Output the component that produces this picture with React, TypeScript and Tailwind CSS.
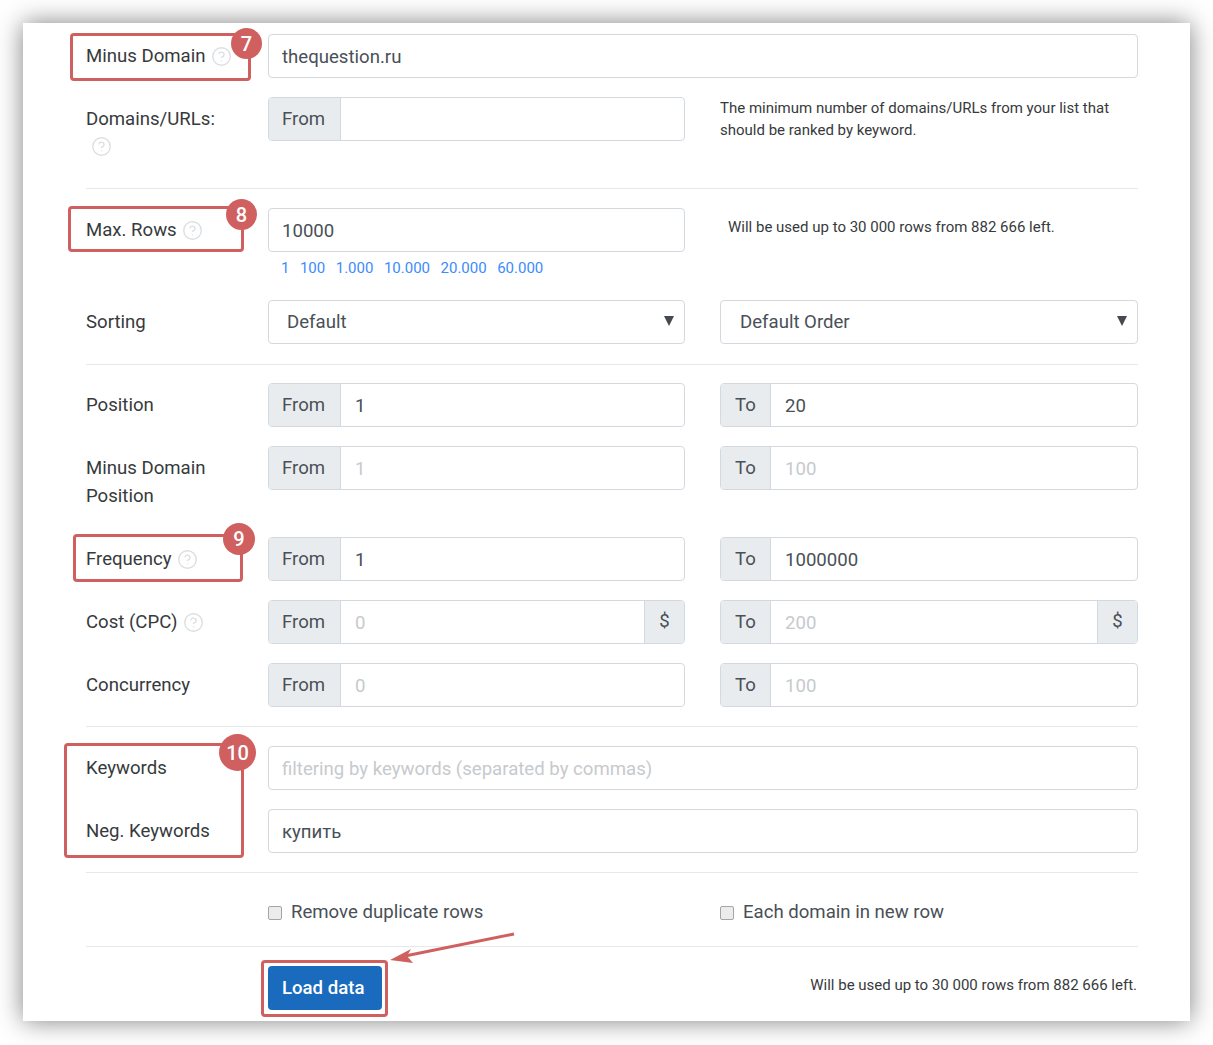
import { CircleHelp } from "lucide-react";

const Help = () => <CircleHelp size={21} strokeWidth={1.6} className="text-[#dcdfe2] shrink-0" />;

function Label({ children }: { children: React.ReactNode }) {
  return <div className="w-[182px] shrink-0 pt-[8px] text-[18.6px] leading-[28px] text-[#373a3c]">{children}</div>;
}

function Row({ className = "", children }: { className?: string; children: React.ReactNode }) {
  return <div className={`flex ${className}`}>{children}</div>;
}

const Divider = ({ className = "" }: { className?: string }) => <div className={`h-px bg-[#e6e8eb] ${className}`} />;

function Field({
  addon,
  value,
  placeholder,
  suffix,
  className = "w-[417px]",
}: {
  addon?: string;
  value?: string;
  placeholder?: string;
  suffix?: string;
  className?: string;
}) {
  return (
    <div className={`flex h-[44px] shrink-0 rounded-[4px] border border-[#d4d9df] bg-white text-[18.6px] text-[#495057] ${className}`}>
      {addon && (
        <span className={`flex items-center rounded-l-[3px] border-r border-[#d4d9df] bg-[#e9ecef] pt-[2px] ${addon === "To" ? "w-[50px] pl-[14px]" : "w-[72px] pl-[13px]"}`}>
          {addon}
        </span>
      )}
      <input
        readOnly
        value={value ?? ""}
        placeholder={placeholder}
        className={`min-w-0 flex-1 bg-transparent pr-[14px] pt-[3px] outline-none placeholder:text-[#c6cacd] ${addon ? "pl-[14px]" : "pl-[13px]"}`}
      />
      {suffix && (
        <span className="flex w-[40px] items-center justify-center rounded-r-[3px] border-l border-[#d4d9df] bg-[#e9ecef]">{suffix}</span>
      )}
    </div>
  );
}

function Select({ value, className = "" }: { value: string; className?: string }) {
  return (
    <div className={`relative flex h-[44px] shrink-0 items-center rounded-[4px] border border-[#d4d9df] bg-white pt-[2px] text-[18.6px] text-[#495057] ${className}`}>
      {value}
      <svg viewBox="0 0 10 10" className="absolute right-[10px] top-[15px] size-[10px] fill-[#454a50]">
        <path d="M0 0h10L5 10z" />
      </svg>
    </div>
  );
}

function Check({ label, className = "" }: { label: string; className?: string }) {
  return (
    <label className={`flex h-[28px] items-center gap-[9px] text-[18.6px] text-[#495057] ${className}`}>
      <span className="mt-[2px] size-[14px] rounded-[2px] border border-[#a5a5a5] bg-[#ececec]" />
      <span className="pt-[2px]">{label}</span>
    </label>
  );
}

function Mark({ box, badge, n }: { box: string; badge: string; n: string }) {
  return (
    <>
      <div className={`absolute rounded-[4px] border-[3px] border-[#d06060] ${box}`} />
      <div className={`absolute flex items-center justify-center rounded-full bg-[#d06060] text-[20px] font-medium text-white ${badge}`}>
        {n}
      </div>
    </>
  );
}

export default function App() {
  const links = ["1", "100", "1.000", "10.000", "20.000", "60.000"];
  const note = "text-[15px] leading-[22px] text-[#373a3c]";
  return (
    <div className="relative h-[1045px] w-[1213px] overflow-hidden bg-white font-['Roboto',sans-serif]">
      <div className="absolute left-[23px] top-[23px] h-[998px] w-[1167px] bg-white pl-[63px] pr-[52px] pt-[11px] shadow-[0_0_24px_rgba(0,0,0,0.5)]">
        <Row>
          <Label>
            <span className="flex items-center gap-[5px]">Minus Domain <Help /></span>
          </Label>
          <Field value="thequestion.ru" className="w-[870px]" />
        </Row>
        <Row className="mt-[19px] h-[44px]">
          <Label>
            Domains/URLs:
            <span className="block pl-[5px] pt-[3px]"><Help /></span>
          </Label>
          <Field addon="From" />
          <p className={`ml-[35px] w-[400px] ${note}`}>
            The minimum number of domains/URLs from your list that should be ranked by keyword.
          </p>
        </Row>
        <Divider className="mt-[47px]" />
        <Row className="mt-[19px]">
          <Label>
            <span className="flex items-center gap-[5px]">Max. Rows <Help /></span>
          </Label>
          <Field value="10000" />
          <p className={`ml-[43px] pt-[8px] ${note}`}>Will be used up to 30 000 rows from 882 666 left.</p>
        </Row>
        <div className="ml-[195px] mt-[6px] flex h-[20px] items-center gap-[10.5px] text-[15px] text-[#3d8bfd]">
          {links.map((l) => (
            <a key={l}>{l}</a>
          ))}
        </div>
        <Row className="mt-[22px]">
          <Label>Sorting</Label>
          <Select value="Default" className="w-[417px] pl-[18px]" />
          <Select value="Default Order" className="ml-[35px] w-[418px] pl-[19px]" />
        </Row>
        <Divider className="mt-[20px]" />
        <Row className="mt-[18px]">
          <Label>Position</Label>
          <Field addon="From" value="1" />
          <Field addon="To" value="20" className="ml-[35px] w-[418px]" />
        </Row>
        <Row className="mt-[19px] h-[72px]">
          <Label>
            Minus Domain
            <br />
            Position
          </Label>
          <Field addon="From" placeholder="1" />
          <Field addon="To" placeholder="100" className="ml-[35px] w-[418px]" />
        </Row>
        <Row className="mt-[19px]">
          <Label>
            <span className="flex items-center gap-[5px]">Frequency <Help /></span>
          </Label>
          <Field addon="From" value="1" />
          <Field addon="To" value="1000000" className="ml-[35px] w-[418px]" />
        </Row>
        <Row className="mt-[19px]">
          <Label>
            <span className="flex items-center gap-[5px]">Cost (CPC) <Help /></span>
          </Label>
          <Field addon="From" placeholder="0" suffix="$" />
          <Field addon="To" placeholder="200" suffix="$" className="ml-[35px] w-[418px]" />
        </Row>
        <Row className="mt-[19px]">
          <Label>Concurrency</Label>
          <Field addon="From" placeholder="0" />
          <Field addon="To" placeholder="100" className="ml-[35px] w-[418px]" />
        </Row>
        <Divider className="mt-[19px]" />
        <Row className="mt-[19px]">
          <Label>Keywords</Label>
          <Field placeholder="filtering by keywords (separated by commas)" className="w-[870px]" />
        </Row>
        <Row className="mt-[19px]">
          <Label>Neg. Keywords</Label>
          <Field value="купить" className="w-[870px]" />
        </Row>
        <Divider className="mt-[19px]" />
        <Row className="mt-[25px]">
          <div className="w-[182px] shrink-0" />
          <Check label="Remove duplicate rows" className="w-[452px]" />
          <Check label="Each domain in new row" />
        </Row>
        <Divider className="mt-[20px]" />
        <Row className="mt-[19px]">
          <div className="w-[182px] shrink-0" />
          <button className="h-[44px] w-[114px] rounded-[4px] bg-[#1a6bbd] pl-[14px] pt-[1px] text-left text-[18.6px] font-medium text-white">Load data</button>
          <p className={`ml-auto pr-[1px] pt-[8px] ${note}`}>Will be used up to 30 000 rows from 882 666 left.</p>
        </Row>
      </div>

      <Mark box="left-[70px] top-[33px] h-[48px] w-[181px]" badge="left-[231px] top-[28px] size-[31px]" n="7" />
      <Mark box="left-[68px] top-[206px] h-[46px] w-[176px]" badge="left-[226px] top-[199px] size-[31px]" n="8" />
      <Mark box="left-[73px] top-[534px] h-[48px] w-[170px]" badge="left-[223px] top-[523px] size-[32px]" n="9" />
      <Mark box="left-[64px] top-[743px] h-[115px] w-[180px]" badge="left-[219px] top-[734px] size-[37px]" n="10" />
      <div className="absolute left-[261px] top-[960px] h-[57px] w-[127px] rounded-[4px] border-[3px] border-[#d06060]" />
      <svg className="absolute left-[385px] top-[928px] h-[40px] w-[135px]" viewBox="0 0 135 40">
        <path d="M129 6 L15 29" stroke="#d06060" strokeWidth="3" fill="none" />
        <path d="M5 32 L26 21 L22 28 L28 35 Z" fill="#d06060" />
      </svg>
    </div>
  );
}
